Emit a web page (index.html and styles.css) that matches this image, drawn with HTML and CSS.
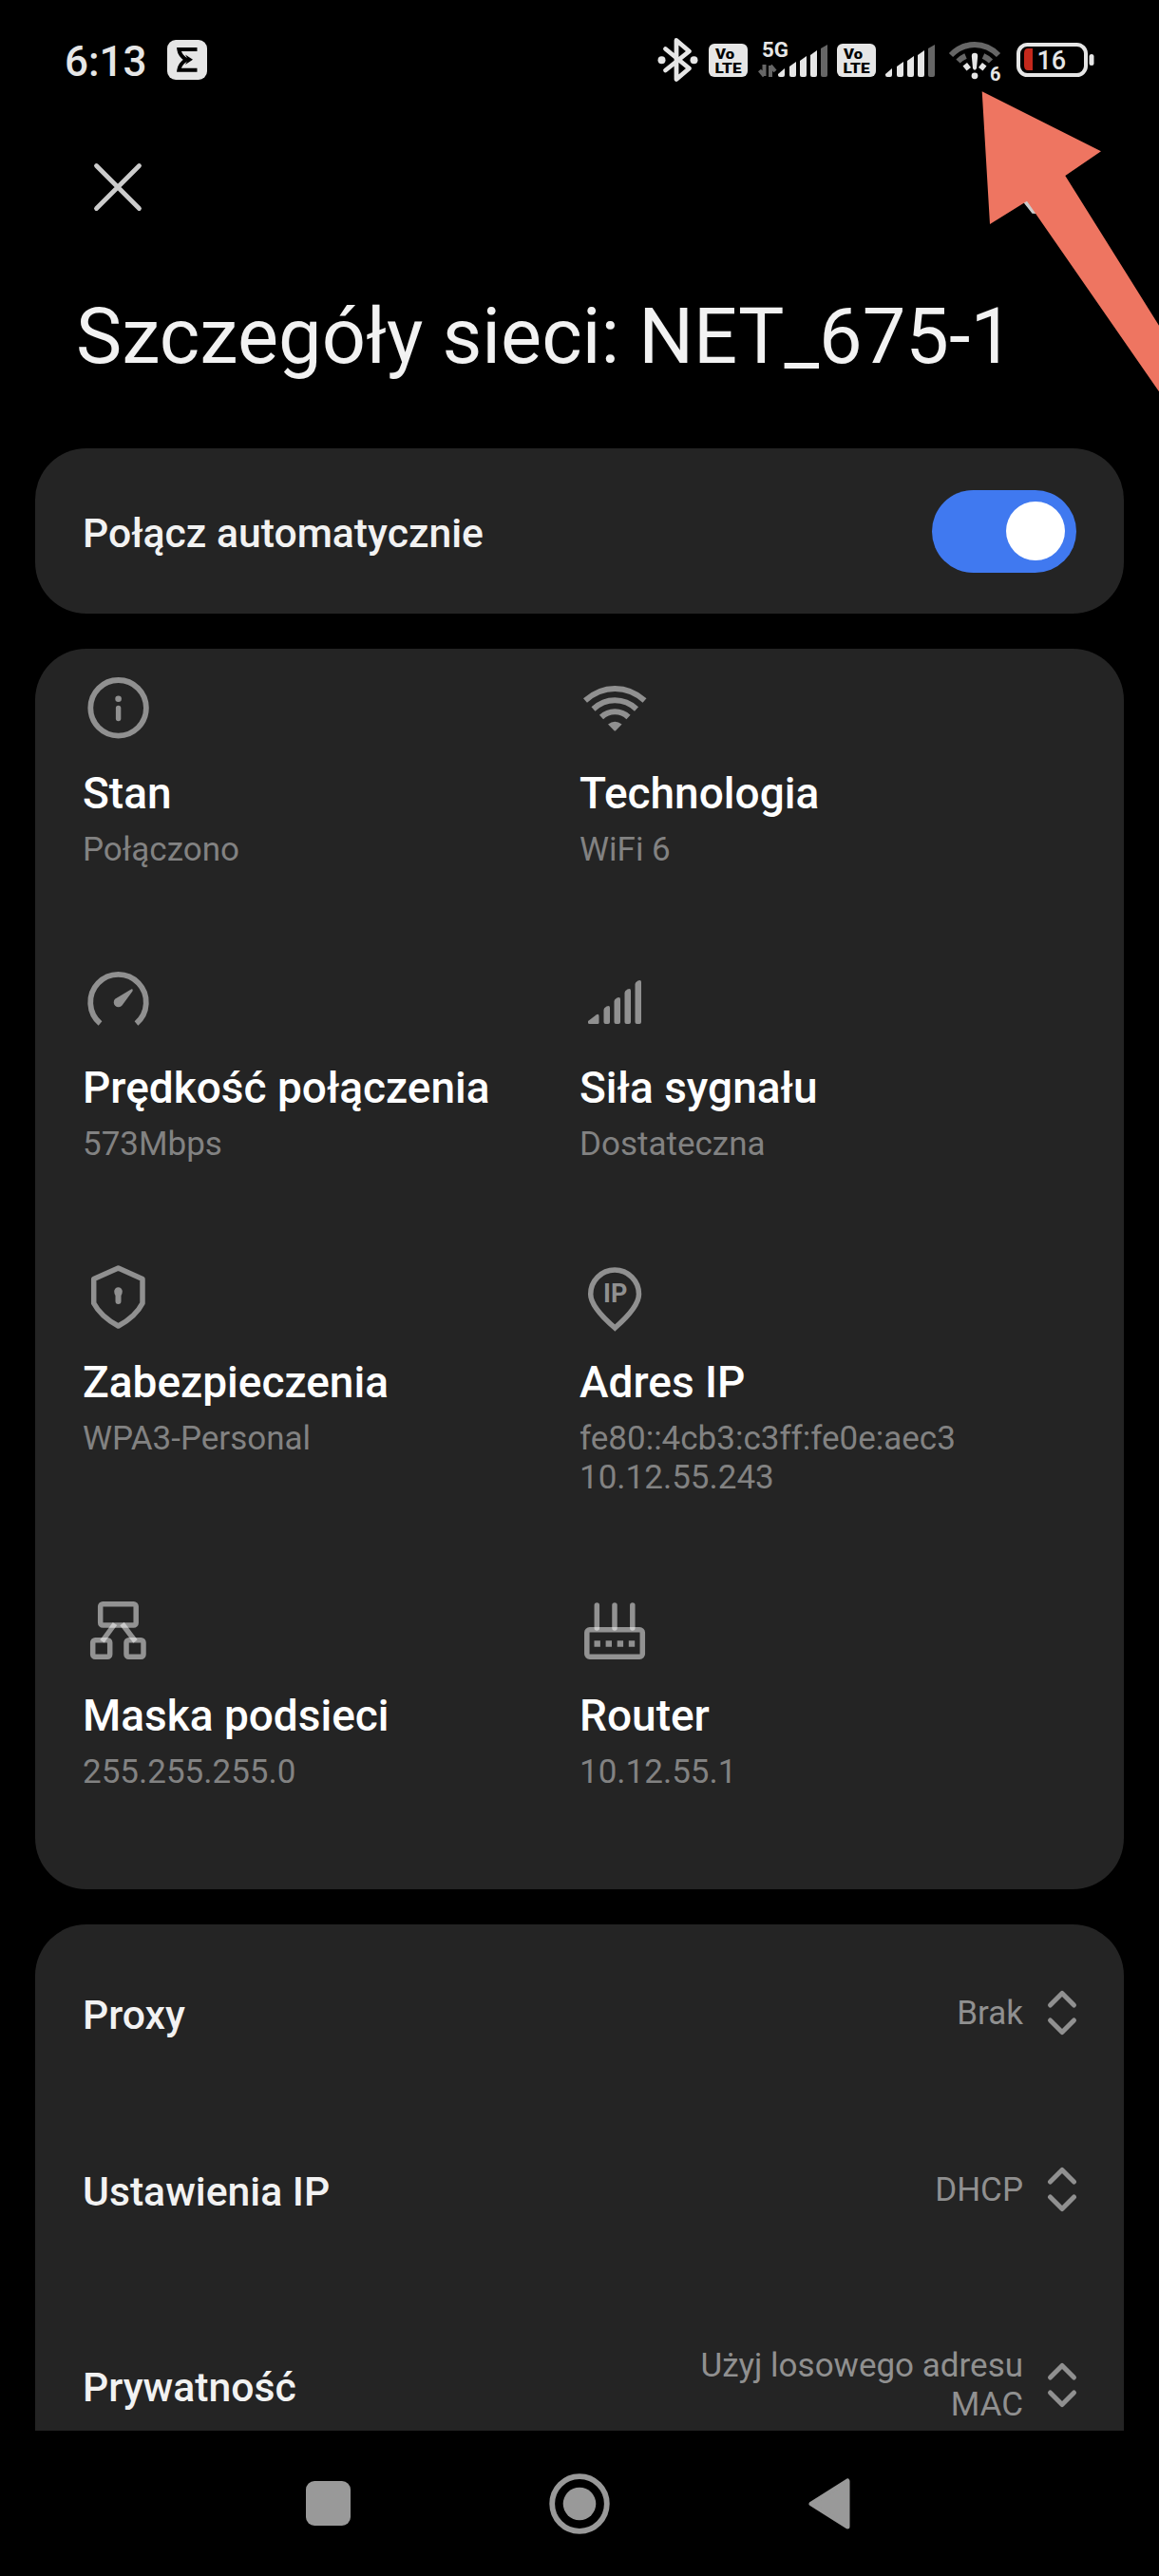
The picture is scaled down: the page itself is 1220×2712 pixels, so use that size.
FILE: index.html
```
<!DOCTYPE html>
<html lang="pl">
<head>
  <meta charset="UTF-8">
  <meta name="viewport" content="width=device-width, initial-scale=1.0">
  <title>Szczegóły sieci</title>
  <link rel="stylesheet" href="styles.css">
</head>
<body>
  <div class="screen">
    <div class="status-bar">
      <span class="clock">6:13</span>
      <svg class="app-badge" width="42" height="42" viewBox="0 0 42 42">
        <rect width="42" height="42" rx="9" fill="#e6e6e6"/>
        <path d="M31.5 9.9H12.3Q13 16 20 20.8Q13 25.6 12.3 31.7H31.5" fill="none" stroke="#000" stroke-width="4"/>
        <path d="M19 15.5L27 20.8L19 26Q23 20.8 19 15.5Z" fill="#000"/>
      </svg>

      <div class="status-icons">
        <!-- bluetooth -->
        <svg width="56" height="60" viewBox="0 0 56 60">
          <path d="M10.5 18.5L35.5 39L22 50.5V9.5L35.5 21L10.5 41" fill="none" stroke="#e6e6e6" stroke-width="4.8" stroke-linecap="round" stroke-linejoin="round"/>
          <circle cx="6.500" cy="30.300" r="4" fill="#e6e6e6"/>
          <circle cx="40.500" cy="30.300" r="4" fill="#e6e6e6"/>
        </svg>
        <!-- sim 1 -->
        <svg width="52" height="60" viewBox="0 0 52 60">
          <rect y="13" width="41" height="35" rx="6" fill="#e6e6e6"/>
          <text class="volte" x="7" y="28.5" textLength="20" lengthAdjust="spacingAndGlyphs">Vo</text>
          <text class="volte" x="6.5" y="43.5" textLength="28" lengthAdjust="spacingAndGlyphs">LTE</text>
        </svg>
        <svg width="83" height="60" viewBox="0 0 83 60">
          <text class="net-5g" x="4" y="27" textLength="28" lengthAdjust="spacingAndGlyphs">5G</text>
          <path d="M6.5 35V47M1.5 41L6.5 47M13 48V36M18 42L13 36" fill="none" stroke="#666" stroke-width="4"/>
          <g fill="#e6e6e6">
            <path d="M21 45L28 39V46Q28 48 26 48H23Q21 48 21 46Z"/>
            <path d="M33 37L40 32V46Q40 48 38 48H35Q33 48 33 46Z"/>
            <path d="M44 31L51 26V46Q51 48 49 48H46Q44 48 44 46Z"/>
            <path d="M55 25L62 20V46Q62 48 60 48H57Q55 48 55 46Z"/>
          </g>
          <path d="M66 18L73 14V46Q73 48 71 48H68Q66 48 66 46Z" fill="#666"/>
        </svg>
        <!-- sim 2 -->
        <svg width="51" height="60" viewBox="0 0 51 60">
          <rect y="13" width="41" height="35" rx="6" fill="#e6e6e6"/>
          <text class="volte" x="7" y="28.5" textLength="20" lengthAdjust="spacingAndGlyphs">Vo</text>
          <text class="volte" x="6.5" y="43.5" textLength="28" lengthAdjust="spacingAndGlyphs">LTE</text>
        </svg>
        <svg width="66" height="60" viewBox="0 0 66 60">
          <g fill="#e6e6e6">
            <path d="M0 45L7 39V46Q7 48 5 48H2Q0 48 0 46Z"/>
            <path d="M12 37L19 32V46Q19 48 17 48H14Q12 48 12 46Z"/>
            <path d="M23 31L30 26V46Q30 48 28 48H25Q23 48 23 46Z"/>
            <path d="M34 25L41 20V46Q41 48 39 48H36Q34 48 34 46Z"/>
          </g>
          <path d="M45 18L52 14V46Q52 48 50 48H47Q45 48 45 46Z" fill="#666"/>
        </svg>
        <!-- wifi 6, no internet -->
        <svg width="72" height="60" viewBox="0 0 72 60">
          <g fill="none" stroke="#666" stroke-width="6">
            <path d="M3 25Q14 14 28 14T53 25"/>
            <path d="M10.5 31.5Q14 28 18.5 26"/>
            <path d="M37 26Q41.500 28 45 31.5"/>
          </g>
          <g fill="none" stroke="#e6e6e6" stroke-width="6.500">
            <path d="M17.500 39L22 35.500"/>
            <path d="M38.500 39L34 35.500"/>
          </g>
          <path d="M24.800 26Q24.800 22.700 28 22.700T31.200 26L30 39Q28 42.500 26 39Z" fill="#e6e6e6"/>
          <circle cx="28" cy="46.800" r="3.400" fill="#e6e6e6"/>
          <text class="wifi-gen" x="44" y="52">6</text>
        </svg>
        <!-- battery -->
        <svg width="84" height="60" viewBox="0 0 84 60">
          <rect x="2" y="14" width="71" height="32" rx="9.500" fill="none" stroke="#e6e6e6" stroke-width="4"/>
          <rect x="76.500" y="24" width="5" height="12" rx="2.500" fill="#e6e6e6"/>
          <path d="M17 18V41H12Q8 41 8 36V23Q8 18 12 18Z" fill="#c4281c"/>
          <text class="battery-level" x="21.500" y="40">16</text>
        </svg>
      </div>
    </div>

    <div class="toolbar">
      <svg width="60" height="60" viewBox="0 0 60 60">
        <path d="M7.5 7.5L52.5 52.5M52.5 7.5L7.5 52.5" stroke="#ccc" stroke-width="4.8" stroke-linecap="round"/>
      </svg>
      <svg width="60" height="60" viewBox="0 0 60 60">
        <path d="M8 34L25.5 56.3L54 24" fill="none" stroke="#ccc" stroke-width="5" stroke-linejoin="bevel"/>
      </svg>
    </div>

    <h1 class="title">Szczegóły sieci: NET_675-1</h1>

    <div class="content">
      <div class="card auto-connect">
        <span class="row-label">Połącz automatycznie</span>
        <div class="switch"><div class="knob"></div></div>
      </div>

      <div class="card details">
        <div class="detail">
          <svg class="detail-icon" viewBox="0 0 76 76">
            <circle cx="37.6" cy="38.3" r="29.3" fill="none" stroke="#909090" stroke-width="5.8"/>
            <circle cx="37.6" cy="28.8" r="3.3" fill="#909090"/>
            <path d="M37.6 38.5V49.5" stroke="#909090" stroke-width="5.4" stroke-linecap="round"/>
          </svg>
          <div class="detail-name">Stan</div>
          <div class="detail-value">Połączono</div>
        </div>
        <div class="detail">
          <svg class="detail-icon" viewBox="0 0 76 76">
            <g fill="none" stroke="#909090" stroke-width="6">
              <path d="M6 30.5Q20 18 37.3 18T68.5 30.5"/>
              <path d="M14.5 39.5Q24.5 30.3 37.3 30.3T60 39.5"/>
              <path d="M23 48Q29 42.3 37.3 42.3T51.5 48"/>
            </g>
            <path d="M30 55.5Q37.3 50 44.6 55.5L38.3 62Q37.3 63 36.3 62Z" fill="#909090"/>
          </svg>
          <div class="detail-name">Technologia</div>
          <div class="detail-value">WiFi 6</div>
        </div>
        <div class="detail">
          <svg class="detail-icon" viewBox="0 0 76 76">
            <path d="M18.5 60.5A29.3 29.3 0 1 1 56.5 60.5" fill="none" stroke="#909090" stroke-width="5.8"/>
            <path d="M51.5 24.3Q53.5 24 52.5 26.5L41.5 41.5A5 5 0 1 1 34 34.8Z" fill="#909090"/>
          </svg>
          <div class="detail-name">Prędkość połączenia</div>
          <div class="detail-value">573Mbps</div>
        </div>
        <div class="detail">
          <svg class="detail-icon" viewBox="0 0 76 76">
            <g fill="#909090">
              <path d="M9 58L17.5 51.5Q20.5 49.5 20.5 53V59.5Q20.5 61 19 61H10.5Q9 61 9 59.5Z"/>
              <path d="M25.5 46Q25.5 44 28.5 42.5Q32 41 32 44V59Q32 61 30 61H27.5Q25.5 61 25.5 59Z"/>
              <path d="M36.5 37Q36.5 35 39.5 33.5Q43 32 43 35V59Q43 61 41 61H38.5Q36.5 61 36.5 59Z"/>
              <path d="M47.5 28Q47.5 26 50.5 24.5Q54 23 54 26V59Q54 61 52 61H49.5Q47.5 61 47.5 59Z"/>
              <path d="M58.5 19Q58.5 17 61.5 15.5Q65 14 65 17V59Q65 61 63 61H60.5Q58.5 61 58.5 59Z"/>
            </g>
          </svg>
          <div class="detail-name">Siła sygnału</div>
          <div class="detail-value">Dostateczna</div>
        </div>
        <div class="detail">
          <svg class="detail-icon" viewBox="0 0 76 76">
            <path d="M37.5 8L63 19.5V45Q56 59 37.5 69Q19 59 11.7 45V19.5Z" fill="none" stroke="#909090" stroke-width="5.5" stroke-linejoin="round"/>
            <path d="M33.2 32.5A4.3 4.3 0 0 1 41.8 32.5Q41.8 35 40.5 37V43A3 3 0 0 1 34.5 43V37Q33.2 35 33.2 32.5Z" fill="#909090"/>
          </svg>
          <div class="detail-name">Zabezpieczenia</div>
          <div class="detail-value">WPA3-Personal</div>
        </div>
        <div class="detail">
          <svg class="detail-icon" viewBox="0 0 76 76">
            <path d="M37.3 71Q11.7 49 11.7 35.5A25.3 25.3 0 0 1 62.5 35.5Q62.5 49 37.3 71Z" fill="none" stroke="#909090" stroke-width="5.5"/>
            <text class="ip-mark" x="25" y="43.5">IP</text>
          </svg>
          <div class="detail-name">Adres IP</div>
          <div class="detail-value">fe80::4cb3:c3ff:fe0e:aec3<br>10.12.55.243</div>
        </div>
        <div class="detail">
          <svg class="detail-icon" viewBox="0 0 76 76">
            <g fill="none" stroke="#fff" stroke-opacity=".5" stroke-width="5.5">
              <rect x="18.7" y="10.7" width="37.5" height="22.3" rx="2.5"/>
              <rect x="10.7" y="48.7" width="18" height="17.6" rx="2.5"/>
              <rect x="46" y="48.7" width="18" height="17.6" rx="2.5"/>
              <path d="M34 31.5L20.5 50"/>
              <path d="M41.5 31.5L55.500 50"/>
            </g>
          </svg>
          <div class="detail-name">Maska podsieci</div>
          <div class="detail-value">255.255.255.0</div>
        </div>
        <div class="detail">
          <svg class="detail-icon" viewBox="0 0 76 76">
            <g fill="none" stroke="#fff" stroke-opacity=".5" stroke-width="5.5">
              <rect x="7.8" y="37.8" width="58.5" height="28.5" rx="3"/>
              <path d="M18.3 12V36" stroke-linecap="round"/>
              <path d="M37 12V36" stroke-linecap="round"/>
              <path d="M55.8 12V36" stroke-linecap="round"/>
            </g>
            <path d="M15.5 52.5H59" stroke="#909090" stroke-width="6.5" stroke-dasharray="6.4 5.7"/>
          </svg>
          <div class="detail-name">Router</div>
          <div class="detail-value">10.12.55.1</div>
        </div>
      </div>

      <div class="card options">
        <div class="option">
          <span class="row-label">Proxy</span>
          <span class="option-value">Brak</span>
          <svg class="updown" viewBox="0 0 34 50"><path d="M4.500 17L17 4.500L29.500 17M4.500 33L17 45.500L29.500 33"/></svg>
        </div>
        <div class="option">
          <span class="row-label">Ustawienia IP</span>
          <span class="option-value">DHCP</span>
          <svg class="updown" viewBox="0 0 34 50"><path d="M4.500 17L17 4.500L29.500 17M4.500 33L17 45.500L29.500 33"/></svg>
        </div>
        <div class="option option-tall">
          <span class="row-label">Prywatność</span>
          <span class="option-value">Użyj losowego adresu MAC</span>
          <svg class="updown" viewBox="0 0 34 50"><path d="M4.500 17L17 4.500L29.500 17M4.500 33L17 45.500L29.500 33"/></svg>
        </div>
      </div>
    </div>

    <div class="nav-bar">
      <div class="nav-recent"></div>
      <svg width="64" height="64" viewBox="0 0 64 64">
        <circle cx="32" cy="32" r="28.8" fill="none" stroke="#999" stroke-width="5.8"/>
        <circle cx="32" cy="32" r="17.3" fill="#999"/>
      </svg>
      <svg width="44" height="54" viewBox="0 0 44 54">
        <path d="M3 27L41 3V51Z" fill="#999" stroke="#999" stroke-width="5" stroke-linejoin="round"/>
      </svg>
    </div>

    <!-- arrow pointing at the wifi icon -->
    <svg class="pointer" width="190" height="330" viewBox="0 0 190 330">
      <path d="M3.7 6.3L129 69.3L91.3 95L190 252.7V322.3L51 121.7L12 146Z" fill="#ee7561"/>
    </svg>
  </div>
</body>
</html>
```
FILE: styles.css
```
* {
  margin: 0;
  padding: 0;
  box-sizing: border-box;
}

body {
  background: #000;
  font-family: Roboto, sans-serif;
  color: #fff;
}

svg {
  display: block;
  flex-shrink: 0;
}

.screen {
  position: relative;
  width: 1220px;
  height: 2712px;
  overflow: hidden;
  display: flex;
  flex-direction: column;
}

/* status bar */
.status-bar {
  height: 126px;
  flex-shrink: 0;
  padding: 0 66px 0 68px;
  display: flex;
  align-items: center;
}

.clock {
  width: 108px;
  padding-top: 4px;
  font-size: 44px;
  font-weight: 500;
  color: #e6e6e6;
}

.status-icons {
  margin-left: auto;
  display: flex;
}

.volte {
  font-size: 15px;
  font-weight: 900;
  fill: #000;
}

.net-5g {
  font-size: 22.5px;
  font-weight: 700;
  fill: #e6e6e6;
}

.wifi-gen {
  font-size: 20px;
  font-weight: 700;
  fill: #e6e6e6;
}

.battery-level {
  font-size: 27px;
  font-weight: 500;
  fill: #e6e6e6;
}

/* header */
.toolbar {
  height: 142px;
  flex-shrink: 0;
  padding: 0 97px 0 94px;
  display: flex;
  align-items: center;
  justify-content: space-between;
}

.title {
  margin: 37px 0 67px 80px;
  flex-shrink: 0;
  font-size: 81.2px;
  font-weight: 400;
  line-height: 100px;
  color: #f2f2f2;
  white-space: nowrap;
}

/* cards */
.content {
  flex: 1;
  min-height: 0;
  overflow: hidden;
  padding: 0 37px;
}

.card {
  background: #242424;
  border-radius: 54px;
  margin-bottom: 37px;
}

.row-label {
  padding-top: 4px;
  font-size: 42.7px;
  font-weight: 500;
  color: #f2f2f2;
}

.auto-connect {
  height: 174px;
  padding: 0 50px;
  display: flex;
  align-items: center;
  justify-content: space-between;
}

.switch {
  width: 152px;
  height: 87px;
  border-radius: 44px;
  padding-right: 12px;
  background: #4079f0;
  display: flex;
  align-items: center;
  justify-content: flex-end;
}

.knob {
  width: 62px;
  height: 62px;
  border-radius: 50%;
  background: #fff;
}

.details {
  height: 1306px;
  padding: 24px 0 0 50px;
  display: grid;
  grid-template-columns: 523px 1fr;
  row-gap: 102px;
  align-content: start;
}

.detail-icon {
  width: 76px;
  height: 76px;
  margin-bottom: 25px;
}

.detail-name {
  font-size: 46px;
  font-weight: 500;
  line-height: 54px;
  margin-bottom: 12px;
}

.detail-value {
  font-size: 35px;
  line-height: 41px;
  color: #828282;
}

.ip-mark {
  font-size: 27px;
  font-weight: 700;
  fill: #909090;
}

.options {
  margin-bottom: 0;
}

.option {
  height: 186px;
  padding: 0 48px 0 50px;
  display: flex;
  align-items: center;
}

.option-tall {
  height: 225px;
}

.option-value {
  width: 360px;
  margin-left: auto;
  margin-right: 24px;
  font-size: 35px;
  line-height: 41px;
  text-align: right;
  color: #909090;
}

.updown {
  width: 34px;
  height: 50px;
  fill: none;
  stroke: #909090;
  stroke-width: 5;
  stroke-linecap: round;
  stroke-linejoin: round;
}

/* navigation bar */
.nav-bar {
  height: 153px;
  flex-shrink: 0;
  padding: 0 325px 0 322px;
  display: flex;
  align-items: center;
  justify-content: space-between;
}

.nav-recent {
  width: 47px;
  height: 47px;
  border-radius: 9px;
  background: #999;
}

.pointer {
  position: absolute;
  top: 90px;
  right: 0;
}
```
